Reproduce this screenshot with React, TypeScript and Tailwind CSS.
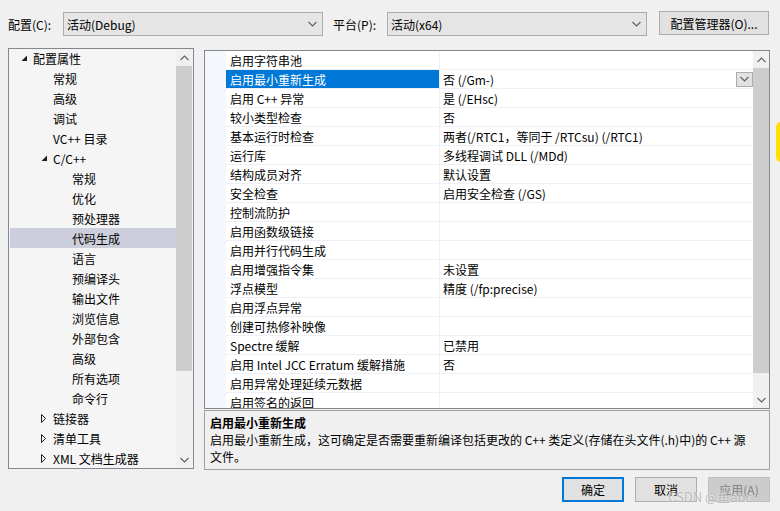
import React from "react";

type TreeRow = { label: string; level: 0 | 1 | 2; arrow?: "open" | "closed"; selected?: boolean };

const TREE: TreeRow[] = [
  { label: "配置属性", level: 0, arrow: "open" },
  { label: "常规", level: 1 },
  { label: "高级", level: 1 },
  { label: "调试", level: 1 },
  { label: "VC++ 目录", level: 1 },
  { label: "C/C++", level: 1, arrow: "open" },
  { label: "常规", level: 2 },
  { label: "优化", level: 2 },
  { label: "预处理器", level: 2 },
  { label: "代码生成", level: 2, selected: true },
  { label: "语言", level: 2 },
  { label: "预编译头", level: 2 },
  { label: "输出文件", level: 2 },
  { label: "浏览信息", level: 2 },
  { label: "外部包含", level: 2 },
  { label: "高级", level: 2 },
  { label: "所有选项", level: 2 },
  { label: "命令行", level: 2 },
  { label: "链接器", level: 1, arrow: "closed" },
  { label: "清单工具", level: 1, arrow: "closed" },
  { label: "XML 文档生成器", level: 1, arrow: "closed" },
];

const PROPS: [string, string][] = [
  ["启用字符串池", ""],
  ["启用最小重新生成", "否 (/Gm-)"],
  ["启用 C++ 异常", "是 (/EHsc)"],
  ["较小类型检查", "否"],
  ["基本运行时检查", "两者(/RTC1，等同于 /RTCsu) (/RTC1)"],
  ["运行库", "多线程调试 DLL (/MDd)"],
  ["结构成员对齐", "默认设置"],
  ["安全检查", "启用安全检查 (/GS)"],
  ["控制流防护", ""],
  ["启用函数级链接", ""],
  ["启用并行代码生成", ""],
  ["启用增强指令集", "未设置"],
  ["浮点模型", "精度 (/fp:precise)"],
  ["启用浮点异常", ""],
  ["创建可热修补映像", ""],
  ["Spectre 缓解", "已禁用"],
  ["启用 Intel JCC Erratum 缓解措施", "否"],
  ["启用异常处理延续元数据", ""],
  ["启用签名的返回", ""],
];

const INDENT = ["pl-[10px]", "pl-[30px]", "pl-[62px]"];

function Chevron({ up = false, className = "" }: { up?: boolean; className?: string }) {
  return (
    <svg width="9" height="6" viewBox="0 0 9 6" className={className}>
      <path d={up ? "M0.5 5L4.5 1L8.5 5" : "M0.5 1L4.5 5L8.5 1"} fill="none" stroke="currentColor" strokeWidth="1.1" />
    </svg>
  );
}

function Combo({ text }: { text: string }) {
  return (
    <div className="w-[260px] h-[24px] bg-[#e5e5e5] border border-[#adadad] flex items-center justify-between pl-[3px] pr-[5px]">
      <span>{text}</span>
      <Chevron className="text-[#606060]" />
    </div>
  );
}

function Scrollbar({ thumbHeight }: { thumbHeight: string }) {
  return (
    <div className="w-[16px] h-full bg-[#f0f0f0] flex flex-col items-center">
      <div className="h-[17px] flex items-center justify-center text-[#606060]">
        <Chevron up />
      </div>
      <div className={`w-full bg-[#cdcdcd] ${thumbHeight}`} />
      <div className="flex-1" />
      <div className="h-[17px] flex items-center justify-center text-[#606060]">
        <Chevron />
      </div>
    </div>
  );
}

function TreeArrow({ kind }: { kind?: "open" | "closed" }) {
  if (kind === "open")
    return (
      <svg width="13" height="20" viewBox="0 0 13 20">
        <path d="M7 7.5L7 13L1.5 13Z" fill="#1e1e1e" />
      </svg>
    );
  if (kind === "closed")
    return (
      <svg width="13" height="20" viewBox="0 0 13 20">
        <path d="M1.5 6.5L5.5 10.5L1.5 14.5Z" fill="none" stroke="#1e1e1e" strokeWidth="1" />
      </svg>
    );
  return null;
}

export default function App() {
  return (
    <div className="relative w-[780px] h-[511px] overflow-hidden bg-[#f0f0f0] text-[12px] text-black font-['Noto_Sans_CJK_SC','Noto_Sans',sans-serif] leading-[17px]">
      {/* top bar */}
      <div className="flex items-center h-[24px] mt-[12px]">
        <span className="ml-[8px] w-[55px]">配置(C):</span>
        <Combo text="活动(Debug)" />
        <span className="ml-[10px] w-[54px]">平台(P):</span>
        <Combo text="活动(x64)" />
        <button className="ml-[12px] -mt-[2px] w-[110px] h-[24px] bg-[#e1e1e1] border border-[#adadad] flex items-center justify-center">
          配置管理器(O)...
        </button>
      </div>

      <div className="flex mt-[12px]">
        {/* tree */}
        <div className="ml-[8px] w-[186px] h-[421px] border border-[#828790] bg-[#f5f5f5] flex">
          <div className="flex-1 pl-[1px] overflow-hidden -mt-[1px]">
            {TREE.map((r, i) => (
              <div
                key={i}
                className={`h-[20px] flex items-center whitespace-nowrap ${INDENT[r.level]} ${r.selected ? "bg-[#cccedb]" : ""}`}
              >
                {r.level < 2 && <TreeArrow kind={r.arrow} />}
                {r.level < 2 && !r.arrow && <span className="w-[13px]" />}
                <span>{r.label}</span>
              </div>
            ))}
          </div>
          <div className="pr-[1px]">
            <Scrollbar thumbHeight="h-[305px]" />
          </div>
        </div>

        {/* right column */}
        <div className="ml-[10px] pt-[2px] flex flex-col">
          <div className="w-[566px] h-[359px] border border-[#828790] bg-[#f4f7fb] flex">
            <div className="w-[21px]" />
            <div className="flex-1 overflow-hidden bg-white">
              {PROPS.map(([k, v], i) => {
                const sel = i === 1;
                return (
                  <div key={i} className="h-[19px] flex border-b border-[#edf0f7] whitespace-nowrap">
                    <div className={`w-[214px] pl-[4px] flex items-center border-r border-[#edf0f7] ${sel ? "bg-[#0078d7] text-white" : ""}`}>
                      {k}
                    </div>
                    <div className="flex-1 pl-[3px] flex items-center justify-between">
                      <span>{v}</span>
                      {sel && (
                        <div className="w-[17px] h-[15px] bg-[#e1e1e1] border border-[#adadad] flex items-center justify-center text-[#606060]">
                          <Chevron />
                        </div>
                      )}
                    </div>
                  </div>
                );
              })}
            </div>
            <Scrollbar thumbHeight="h-[305px]" />
          </div>

          {/* description */}
          <div className="mt-[1px] w-[566px] h-[60px] border border-[#a0a0a0] px-[5px] pt-[3px]">
            <div className="font-bold">启用最小重新生成</div>
            <div className="whitespace-nowrap">
              启用最小重新生成，这可确定是否需要重新编译包括更改的 C++ 类定义(存储在头文件(.h)中)的 C++ 源
              <br />
              文件。
            </div>
          </div>

          {/* buttons */}
          <div className="flex justify-end gap-[11px] mt-[7px] w-[566px]">
            <button className="w-[62px] h-[25px] bg-[#e1e1e1] border-2 border-[#0078d7] flex items-center justify-center">确定</button>
            <button className="w-[62px] h-[25px] bg-[#e1e1e1] border border-[#adadad] flex items-center justify-center">取消</button>
            <button className="w-[62px] h-[25px] bg-[#cccccc] border border-[#bfbfbf] text-[#838383] flex items-center justify-center">应用(A)</button>
          </div>
        </div>
      </div>

      {/* watermark */}
      <div className="absolute left-[668px] top-[488px] text-[13px] text-[#a9a9a9]/80 [text-shadow:0_0_2px_#fff] whitespace-nowrap">
        CSDN @鱼abc
      </div>
      {/* yellow edge tab */}
      <div className="absolute left-[776px] top-[122px] w-[8px] h-[40px] bg-[#ffe100] rounded-l-[5px]" />
    </div>
  );
}
